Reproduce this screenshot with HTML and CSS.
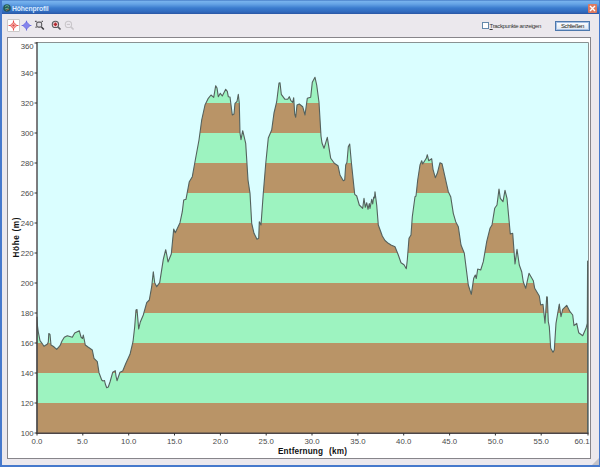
FILE: index.html
```html
<!DOCTYPE html>
<html lang="de">

<head>
    <meta charset="UTF-8">
    <meta name="viewport" content="width=device-width, initial-scale=1.0">
    <title>Höhenprofil</title>
    <link rel="stylesheet" href="styles.css">
</head>

<body>
    <div class="window">
        <div class="titlebar">
            <svg class="app-icon" viewBox="0 0 8 8">
                <circle cx="4" cy="4" r="3.8" fill="#24585b" />
                <path d="M2 2.5L4 1.5L6 2.5M2 5L5.5 4" stroke="#65b48c" fill="none" />
                <path d="M3 6.5L6 5" stroke="#a66c50" fill="none" />
            </svg>
            <span class="title">Höhenprofil</span>
            <button class="close-button" aria-label="Close">
                <svg viewBox="0 0 9 9"><path d="M2 2L7 7M7 2L2 7" stroke="#fff" stroke-width="1.4" /></svg>
            </button>
        </div>

        <div class="toolbar">
            <button class="tool active">
                <svg viewBox="1 1 10 10" fill="none" stroke="#e8504c">
                    <path d="M6 1.5V10.5M1.5 6H10.5" />
                    <path d="M6 3L9 6L6 9L3 6Z" fill="#f5aaa5" stroke-width=".8" />
                    <circle cx="6" cy="6" r="1" fill="#d94545" stroke="none" />
                </svg>
            </button>
            <button class="tool">
                <svg viewBox="0 0 12 12" fill="none" stroke="#6b6be0">
                    <path d="M6 1.5V10.5M1.5 6H10.5" />
                    <path d="M6 2.7L9.3 6L6 9.3L2.7 6Z" fill="#8585ed" stroke-width=".8" />
                </svg>
            </button>
            <button class="tool">
                <svg viewBox="0 0 12 12" fill="none" stroke="#5b595d">
                    <path d="M1.8 2.2H3.4M8 2.2H9.2M2.8 8.2V7" />
                    <rect x="3.4" y="2.9" width="4.6" height="4.6" rx="1.5" fill="#e1dfe4" />
                    <path d="M7.8 7.3L10 9.8" stroke="#3b393d" stroke-width="1.4" />
                </svg>
            </button>
            <button class="tool zoom-in">
                <svg viewBox="0 0 12 12" fill="none" stroke="#5b595d">
                    <circle cx="5" cy="5" r="2.9" fill="#eee5e7" />
                    <path d="M7.3 7.3L9.7 9.7" stroke-width="1.5" />
                    <path d="M3.3 5H6.7M5 3.3V6.7" stroke="#b4282f" stroke-width="1.5" />
                </svg>
            </button>
            <button class="tool">
                <svg viewBox="0 0 12 12" fill="none" stroke="#c9c6ca">
                    <circle cx="5" cy="5" r="2.9" />
                    <path d="M7.3 7.3L9.7 9.7" stroke-width="1.5" />
                    <path d="M3.5 5H6.5" />
                </svg>
            </button>
            <label class="trackpoints"><input type="checkbox"><span><u>T</u>rackpunkte anzeigen</span></label>
            <button class="dismiss">Schließen</button>
        </div>

        <div class="chart-panel">
            <svg class="chart" viewBox="8 38 582 420">
                <defs>
                    <!-- 20 m per band, 30px each -->
                    <pattern id="bands" x="0" y="373" width="600" height="60" patternUnits="userSpaceOnUse">
                        <rect width="600" height="30" fill="#9df3c0" />
                        <rect y="30" width="600" height="30" fill="#b99467" />
                    </pattern>
                </defs>
                <rect x="37" y="42" width="551" height="391" fill="#dafeff" />
                <path class="profile" fill="url(#bands)" d="M37 433V317L37.5 326L38.3 332L40 340.7L42 343.3L44 346.3L47.5 344L48.3 342L48.8 333.5L50 334.5L51 345L53.5 346.5L56.7 349.3L60 345.7L62 341L64.3 337.3L67.3 335.7L72.3 337.3L74.7 333L79.3 330.7L81 337L82.5 338.5L83.3 335L85.3 345L88 347L92.3 350L94 358.3L97.3 361.7L99 372.7L101.7 380L103 381L104.5 380.5L105.3 384L106.7 387.7L108.3 387L110 382L112.7 372.3L115.3 370.7L116 376L117 380.7L120 372.3L122.7 371L126 363L130 354.3L133 341.7L134.7 326.7L136 310L137 309.5L138.7 329L140.3 322L143.3 315L146.7 302.7L149.3 300L151.7 286.7L153.3 271.7L154.7 282.7L156.7 286.7L159.7 282.7L163.3 259.3L165.7 249.7L167 256L168 262L171.3 254L173.7 229L175.3 232.7L180 222.7L182.3 211.7L183.7 200L186 199.3L189.3 181.7L192.3 176.7L195.3 160L199 140L201.7 120L205 105L208.3 98.3L211 95L213.7 97.3L215.7 85.7L217 88L218.3 96.7L220.3 93.3L222.3 96L225.7 89.3L227.3 91.3L228.3 96.7L230 97L232.3 115L234 114L235 103.3L237 101.5L238.3 94.3L239.3 103.3L240 133L241 139.7L242.7 130.7L245.7 143.3L248 180L250 193.3L251.7 223.3L254 233.3L257 239.3L258.7 238.3L259.3 221.7L261 225L263.3 193.3L265.7 164L268.3 138L271.7 130L274 113L276.7 101.7L279 83L280 82.7L281.3 94.3L285 99.3L287.7 99.3L289.3 96.7L290.7 100.3L292.7 102.3L293.7 97.7L294.7 114L295.7 117.3L297 105L299.3 104L302.7 106.7L305 115L307.3 98.3L310.7 97.3L312.3 82.3L315 77.3L316.7 85L319 102.3L321 136L322 143L324 148.3L327.3 137.3L330.7 158.3L334.3 163.3L338 165.7L340 175L343.3 180.7L344.7 180L345.7 165L347 162.3L348.3 146.7L349.7 144L351.3 161.7L354.7 194.3L356.7 196L359.3 205L362.7 208.3L364 198.3L365.3 207.3L366.7 202.7L368 209.3L369.3 203.5L370 208.5L371.7 199.3L372.7 204L373.7 197L374.5 198L375 191.7L376.7 205L378.3 225L382.3 236L385 240.5L388.3 243.3L391 245L395 246.7L398.3 255L401 262.7L404 264.7L406.3 268.7L407.3 260L409 238.3L411 235L412.3 216.7L415 196.7L416 196L417.7 180L420 165L421.7 160.7L422.7 164L426.3 158.3L427.3 154.7L428.7 160.7L431.7 158.7L433 169.3L435.3 177.7L437.3 173.3L440 162.7L442 163.7L448.3 191.7L450.7 196.7L453.3 213.3L455.7 221.7L458.3 226.7L461 245L464.3 253.3L468.3 285L471.3 294.3L473.7 278.3L475.3 275L476.3 278.5L477.7 269L480.7 270L483.3 261.7L486.7 241.7L490 228.3L492 225L494.7 208.3L497 205L499 189L500.3 198.3L503 201.7L505 190.3L507 198.3L509 220L510.3 234L512.7 233.3L515 264L517 249.3L519.3 265L521.7 271.7L523.3 282L525.7 288.3L529 273.3L533.3 280.7L534.7 288.3L539.3 296L540.7 305L543 304.3L545 323.3L546.7 296.7L547.3 297L548.3 321.7L549.3 326.7L550.7 348.3L553 352.3L554.3 350L556 323.3L559.3 304L561 316.7L562.7 309.3L566.7 305.3L570 311.7L572.7 315L574 325.7L576.7 323.3L578.7 332.7L582.7 335.7L586 328.3L587.3 323.3L587.6 261V433" />

                <path class="frame" d="M37 42.5H588.5V433" />
                <path class="axis" d="M37 42V433.2H588.5" />
                <path class="ticks" d="M34.5 43H37M34.5 73H37M34.5 103H37M34.5 133H37M34.5 163H37M34.5 193H37M34.5 223H37M34.5 253H37M34.5 283H37M34.5 313H37M34.5 343H37M34.5 373H37M34.5 403H37M34.5 433H37M37 433V435.5M82.8 433V435.5M128.7 433V435.5M174.5 433V435.5M220.4 433V435.5M266.2 433V435.5M312 433V435.5M357.9 433V435.5M403.7 433V435.5M449.6 433V435.5M495.4 433V435.5M541.2 433V435.5M588 433V435.5" />

                <g class="y-labels">
                    <text x="33.7" y="48.6">360</text>
                    <text x="33.7" y="75.6">340</text>
                    <text x="33.7" y="105.6">320</text>
                    <text x="33.7" y="135.6">300</text>
                    <text x="33.7" y="165.6">280</text>
                    <text x="33.7" y="195.6">260</text>
                    <text x="33.7" y="225.6">240</text>
                    <text x="33.7" y="255.6">220</text>
                    <text x="33.7" y="285.6">200</text>
                    <text x="33.7" y="315.6">180</text>
                    <text x="33.7" y="345.6">160</text>
                    <text x="33.7" y="375.6">140</text>
                    <text x="33.7" y="405.6">120</text>
                    <text x="33.7" y="435.6">100</text>
                </g>
                <g class="x-labels">
                    <text x="37" y="443.7">0.0</text>
                    <text x="82.5" y="443.7">5.0</text>
                    <text x="128.7" y="443.7">10.0</text>
                    <text x="174.5" y="443.7">15.0</text>
                    <text x="220.4" y="443.7">20.0</text>
                    <text x="266.2" y="443.7">25.0</text>
                    <text x="312" y="443.7">30.0</text>
                    <text x="357.9" y="443.7">35.0</text>
                    <text x="403.7" y="443.7">40.0</text>
                    <text x="449.6" y="443.7">45.0</text>
                    <text x="495.4" y="443.7">50.0</text>
                    <text x="541.2" y="443.7">55.0</text>
                    <text x="582" y="443.7">60.1</text>
                </g>
                <text class="axis-title" x="278" y="453.9" textLength="45">Entfernung</text>
                <text class="axis-title" x="329" y="453.9" textLength="18">(km)</text>
                <text class="axis-title" transform="translate(18.8 257.5) rotate(-90)" textLength="40">Höhe (m)</text>
            </svg>
        </div>
        <svg class="grip" viewBox="0 0 8 8"><path d="M8 0V8H0Z" fill="#c4c2c8" /></svg>
    </div>
</body>

</html>
```
FILE: styles.css
```css
* {
    box-sizing: border-box;
}

body {
    margin: 0;
    font-family: "Liberation Sans", Arial, sans-serif;
}

.window {
    position: relative;
    display: flex;
    flex-direction: column;
    width: 600px;
    height: 467px;
    border: solid #4679cc;
    border-width: 0 1px 2px 2px;
    background-color: #ebe8ed;
    overflow: hidden;
}

.titlebar {
    display: flex;
    align-items: center;
    height: 14px;
    margin: 0 -1px 0 -2px;
    padding: 2px 3px 0;
    background: linear-gradient(#3468b8 0, #79b4ee 1px, #66a4e6 4px, #3b7cce 8px, #3069bd 12px, #2955a4 14px);
}

.app-icon {
    flex-shrink: 0;
    width: 8px;
    height: 8px;
}

.title {
    flex: 1;
    margin-left: 1px;
    color: #d9eaff;
    font: bold 6.8px "Liberation Sans", Arial, sans-serif;
    letter-spacing: -0.15px;
}

button {
    padding: 0;
    border: 0;
    background: none;
}

.close-button {
    width: 9px;
    height: 9px;
    border-radius: 1px;
    background-color: #de795f;
}

.close-button svg,
.tool svg {
    display: block;
    width: 100%;
    height: 100%;
}

.toolbar {
    display: flex;
    align-items: center;
    height: 23px;
    padding: 0 9px 0 5px;
}

.tool {
    width: 13px;
    height: 13px;
}

.tool.active {
    border: 1px solid #cbc8c8;
    border-radius: 1px;
    background-color: #fff;
}

.zoom-in {
    margin-left: 4px;
}

.trackpoints {
    display: flex;
    align-items: center;
    gap: 1px;
    margin-left: auto;
    color: #333;
    font-size: 6px;
    letter-spacing: -0.37px;
}

.trackpoints input {
    width: 7px;
    height: 7px;
    margin: 0;
    appearance: none;
    border: 1px solid #6489ab;
    background-color: #fff;
}

.dismiss {
    width: 35px;
    height: 10px;
    margin-left: 14px;
    border: 1px solid #4d78ad;
    background: linear-gradient(#fff, #dce5f0);
    box-shadow: inset 0 0 0 1px #a7c1e4;
    color: #222;
    font: 6px/8px "Liberation Sans", Arial, sans-serif;
    letter-spacing: -0.4px;
}

.trackpoints,
.dismiss {
    white-space: nowrap;
}

.chart-panel {
    width: 584px;
    height: 422px;
    margin-left: 5px;
    border: 1px solid #87858a;
    background-color: #fff;
}

.chart {
    display: block;
    width: 582px;
    height: 420px;
}

.profile {
    stroke: #54615d;
    stroke-width: 1.1;
    stroke-linejoin: round;
}

.frame {
    fill: none;
    stroke: #8a9292;
}

.axis {
    fill: none;
    stroke: #4c4648;
    stroke-width: 1.4;
}

.ticks {
    stroke: #333;
}

.y-labels,
.x-labels {
    fill: #4a4a4a;
    font-size: 7.8px;
}

.y-labels {
    text-anchor: end;
}

.x-labels {
    text-anchor: middle;
}

.axis-title {
    fill: #111;
    font-size: 8.2px;
    font-weight: bold;
}

.grip {
    position: absolute;
    right: 0;
    bottom: 0;
    width: 7px;
    height: 7px;
}
```
